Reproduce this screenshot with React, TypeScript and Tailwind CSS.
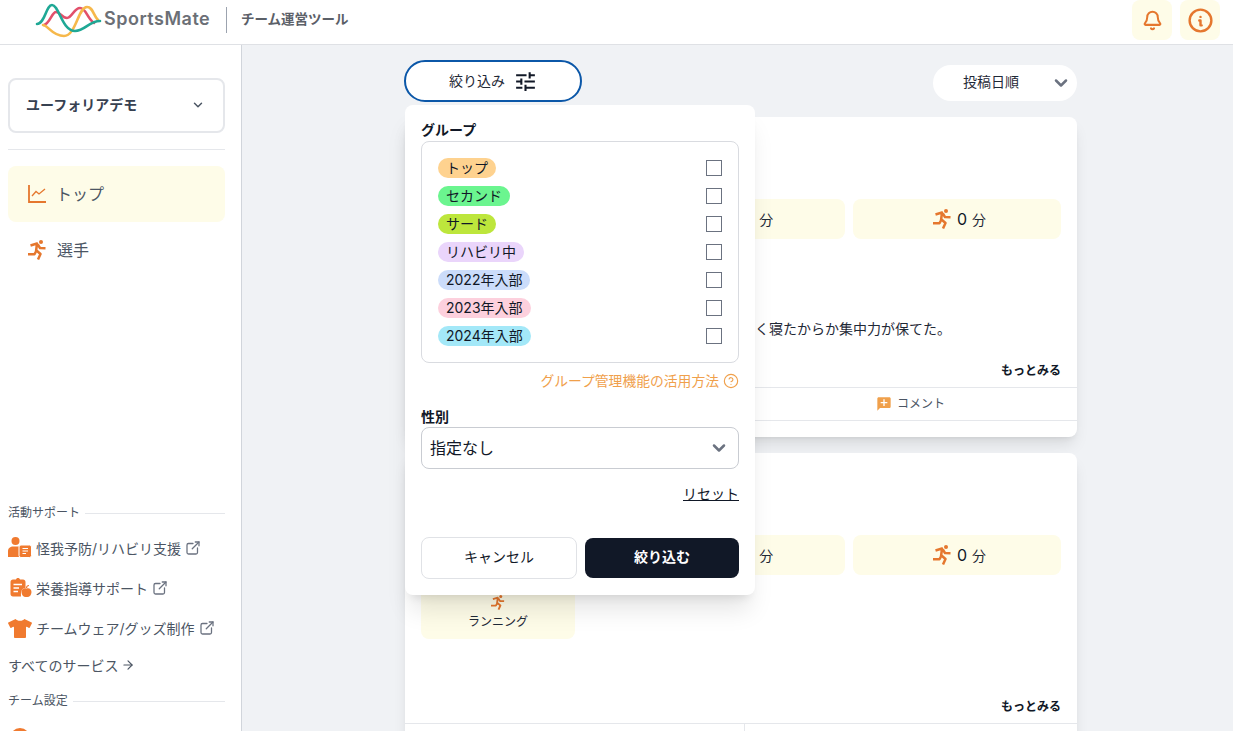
import { ArrowRight, Bell, ChevronDown, CircleHelp } from "lucide-react";
import { MdAddComment, MdTune } from "react-icons/md";
import { FaTshirt } from "react-icons/fa";
import { TbExternalLink, TbInfoCircle } from "react-icons/tb";

const font = { fontFamily: 'Inter, "Noto Sans CJK JP", sans-serif' };

function Logo() {
  return (
    <svg width="68" height="36" viewBox="0 0 68 36" fill="none" strokeWidth="2.6" strokeLinecap="round">
      <path d="M9 23C15 21 17 10 21 10C25 10 27 16 32 16C37 16 39 6 45 6C51 6 52 16 59 21" stroke="#e2506b" />
      <path d="M8 23C14 24 17 34 29 34C41 34 43 5 52 5C58 5 58 13 63 18" stroke="#f6b84b" />
      <path d="M2 22C10 22 11 3 17 3C24 3 27 29 40 29C50 29 54 19 65 19" stroke="#1fa895" />
    </svg>
  );
}

function Runner({ size = 20, className }: { size?: number; className?: string }) {
  return (
    <svg width={size * 0.9} height={size} viewBox="0 0 18 20" fill="none" className={className}>
      <circle cx="13" cy="2" r="2" fill="currentColor" />
      <path
        d="M2.500 5.500L9 3.500L8 11.500L6.500 14.200H0M9.800 4.500L12 8L17.500 8.200M8.500 10.500L12.500 14L10 19.500"
        stroke="currentColor"
        strokeWidth="2.500"
        strokeLinejoin="round"
      />
    </svg>
  );
}

function ChartIcon() {
  return (
    <svg width="18" height="18" viewBox="0 0 18 18" fill="none" stroke="#e5772e">
      <path d="M1 0V17H18" strokeWidth="1.800" />
      <path d="M4 11L8 6.500L11 9L17 4" strokeWidth="1.300" />
    </svg>
  );
}

function PersonDocIcon() {
  return (
    <svg width="24" height="22" viewBox="0 0 24 22" fill="#f07a2f">
      <circle cx="7.500" cy="4" r="4" />
      <path d="M0 20V14C0 11 2.500 9.500 5 9.500H11C12 9.500 12.500 10 12.500 11V20Z" />
      <rect x="11" y="8" width="12.500" height="12.500" rx="2" stroke="#fff" strokeWidth="1" />
      <path d="M14.500 11.500H20M14.500 14H20M14.500 16.500H18" stroke="#fff" strokeWidth="1.200" />
    </svg>
  );
}

function ClipboardAppleIcon() {
  return (
    <svg width="24" height="22" viewBox="0 0 24 22" fill="#f07a2f">
      <path d="M5 2.500H8C8.300 0.500 11.700 0.500 12 2.500H15C16.500 2.500 17.500 3.500 17.500 5V11C14 11 12.500 14 13 19.500H5C3.500 19.500 2.500 18.500 2.500 17V5C2.500 3.500 3.500 2.500 5 2.500Z" />
      <path d="M5.500 7.500H14M5.500 11H11M5.500 14.500H10" stroke="#fff" strokeWidth="1.400" />
      <path d="M18.500 11.500C21 10.500 23.500 12 23.500 15C23.500 18.500 21 20.500 18.500 20C16 20.500 13.500 18.500 13.500 15C13.500 12 16 10.500 18.500 11.500Z" />
      <path d="M18.500 11C18.500 9.500 19.500 8.500 21 8.500" stroke="#f07a2f" strokeWidth="1.200" fill="none" />
    </svg>
  );
}

function SectionLabel({ children, className }: { children: string; className?: string }) {
  return (
    <div className={`flex shrink-0 items-center gap-[5px] text-[12px] leading-[16px] text-[#4b5563] ${className ?? ""}`}>
      <span>{children}</span>
      <span className="h-px flex-1 bg-[#e5e7eb]" />
    </div>
  );
}

function SideLink({ icon, label }: { icon: React.ReactNode; label: string }) {
  return (
    <div className="flex h-[40px] items-center text-[14px] text-[#4b5563]">
      <span className="mr-[4px] flex w-[24px] justify-center">{icon}</span>
      <span>{label}</span>
      <TbExternalLink className="ml-[3px] text-[#6b7280]" size={18} strokeWidth={1.700} />
    </div>
  );
}

function Sidebar() {
  return (
    <aside className="flex h-full w-[242px] shrink-0 flex-col border-r border-[#d1d5db] bg-white pl-2 pr-4 pt-[33px]">
      <div className="flex h-[55px] shrink-0 items-center justify-between rounded-lg border-2 border-[#e5e7eb] pb-[2px] pl-[16px] pr-[18px]">
        <span className="text-[14px] font-bold text-[#374151]">ユーフォリアデモ</span>
        <ChevronDown size={14} strokeWidth={2.500} className="text-[#4b5563]" />
      </div>
      <div className="mt-[16px] h-px shrink-0 bg-[#e5e7eb]" />
      <div className="mt-[16px] flex h-[56px] shrink-0 items-center rounded-lg bg-[#fefce8] pl-[20px] text-[16px] text-[#4b5563]">
        <span className="mr-[10px]">
          <ChartIcon />
        </span>
        トップ
      </div>
      <div className="flex h-[56px] shrink-0 items-center pl-[20px] text-[16px] text-[#4b5563]">
        <Runner size={20} className="mr-[11px] text-[#e5772e]" />
        選手
      </div>
      <SectionLabel className="mt-[227px]">活動サポート</SectionLabel>
      <div className="mt-[7px] shrink-0">
        <SideLink icon={<PersonDocIcon />} label="怪我予防/リハビリ支援" />
        <SideLink icon={<ClipboardAppleIcon />} label="栄養指導サポート" />
        <SideLink icon={<FaTshirt size={25} className="text-[#f07a2f]" />} label="チームウェア/グッズ制作" />
      </div>
      <div className="mt-[7px] flex h-[20px] shrink-0 items-center text-[14px] text-[#4b5563]">
        すべてのサービス
        <ArrowRight size={14} className="ml-[3px]" />
      </div>
      <SectionLabel className="mt-[18px]">チーム設定</SectionLabel>
      <div className="mt-[9px] shrink-0">
        <SideLink
          icon={<span className="block h-[20px] w-[20px] rounded-full bg-[#f07a2f]" />}
          label="グループ管理"
        />
      </div>
    </aside>
  );
}

function Stat({ value = "0" }: { value?: string }) {
  return (
    <div className="flex h-[40px] items-center justify-center gap-[6px] rounded-lg bg-[#fefce8] pl-[5px]">
      <Runner size={20} className="text-[#e5772e]" />
      <span className="flex items-center gap-[5px]">
        <span className="text-[16px] text-[#111827]">{value}</span>
        <span className="text-[14px] text-[#1f2937]">分</span>
      </span>
    </div>
  );
}

function MoreLink() {
  return <div className="text-right text-[12px] font-bold leading-[16px] text-[#111827]">もっとみる</div>;
}

function Card({ children, className }: { children: React.ReactNode; className?: string }) {
  return <article className={`w-[672px] rounded-lg bg-white shadow-lg ${className ?? ""}`}>{children}</article>;
}

const groups = [
  { label: "トップ", bg: "bg-[#fed28f]" },
  { label: "セカンド", bg: "bg-[#6bf58f]" },
  { label: "サード", bg: "bg-[#bde63c]" },
  { label: "リハビリ中", bg: "bg-[#ead5fb]" },
  { label: "2022年入部", bg: "bg-[#cbdcfa]" },
  { label: "2023年入部", bg: "bg-[#fdd0dd]" },
  { label: "2024年入部", bg: "bg-[#a3e8f8]" },
];

function FilterPanel() {
  return (
    <div className="absolute left-0 top-[45px] z-10 h-[490px] w-[350px] rounded-lg bg-white px-4 pt-[16px] shadow-xl">
      <div className="text-[14px] font-bold leading-[18px] text-[#111827]">グループ</div>
      <div className="mt-[2px] rounded-lg border border-[#d9dbe0] px-4 py-3">
        {groups.map((g) => (
          <div key={g.label} className="flex h-[28px] items-center justify-between">
            <span className={`rounded-full px-[8px] text-[14px] leading-[20px] text-[#111827] ${g.bg}`}>{g.label}</span>
            <span className="h-[16px] w-[16px] border border-[#6b7280] bg-white" />
          </div>
        ))}
      </div>
      <div className="mt-[8px] flex items-center justify-end gap-[4px] text-[13.800px] leading-[20px] text-[#f0a04b]">
        グループ管理機能の活用方法
        <CircleHelp size={16} strokeWidth={1.700} />
      </div>
      <div className="mt-[17px] text-[14px] font-bold leading-[18px] text-[#111827]">性別</div>
      <div className="mt-px flex h-[42px] items-center justify-between rounded-lg border border-[#c9ccd2] pl-[8px] pr-[9px] text-[16px] text-[#111827]">
        指定なし
        <ChevronDown size={20} strokeWidth={3} className="text-[#6b7280]" />
      </div>
      <div className="mt-[15px] text-right text-[14px] leading-[20px] text-[#111827] underline">リセット</div>
      <div className="mt-[33px] flex items-center gap-[8px]">
        <button className="h-[42px] w-[156px] rounded-lg border border-[#e0e2e6] bg-white pb-[3px] text-[14px] text-[#111827]">
          キャンセル
        </button>
        <button className="h-[40px] w-[154px] rounded-lg bg-[#111827] pb-[3px] text-[14px] font-bold text-white">
          絞り込む
        </button>
      </div>
    </div>
  );
}

export default function App() {
  return (
    <div className="flex h-[731px] w-[1233px] flex-col overflow-hidden bg-[#f0f2f5]" style={font}>
      <header className="flex h-[45px] shrink-0 items-start border-b border-[#dfe1e5] bg-white pl-[35px] pr-[13px]">
        <div className="mt-[2px]">
          <Logo />
        </div>
        <span className="ml-px mt-[8px] w-[107px] text-[18px] font-semibold leading-[22px] tracking-[0.5px] text-[#6b6f76]">
          SportsMate
        </span>
        <span className="ml-[15px] mt-[7px] h-[26px] w-px bg-[#9ca3af]" />
        <span className="ml-[14px] mt-[10px] text-[13.500px] font-bold leading-[18px] text-[#5b6068]">チーム運営ツール</span>
        <div className="ml-auto flex gap-[8px]">
          <span className="flex h-[40px] w-[40px] items-center justify-center rounded-lg bg-[#fefce8]">
            <Bell size={21} strokeWidth={2.300} className="text-[#e5772e]" />
          </span>
          <span className="flex h-[40px] w-[40px] items-center justify-center rounded-lg bg-[#fefce8]">
            <TbInfoCircle size={29} strokeWidth={2} className="text-[#e5772e]" />
          </span>
        </div>
      </header>
      <div className="flex min-h-0 flex-1">
        <Sidebar />
        <main className="min-w-0 flex-1 pl-[163px] pt-[15px]">
          <div className="relative w-[672px]">
            <div className="flex h-[42px] items-start justify-between">
              <button className="ml-[-1px] flex h-[42px] w-[178px] items-center justify-center gap-[8px] rounded-full border-2 border-[#0b57a8] bg-white text-[14px] text-[#1f2937]">
                <span className="pb-[2px] pl-px">絞り込み</span>
                <MdTune size={25} className="text-[#111827]" />
              </button>
              <div className="relative mt-[5px] flex h-[36px] w-[144px] items-center rounded-full bg-white pb-[3px] pl-[30px] text-[14px] text-[#1f2937]">
                投稿日順
                <ChevronDown size={20} strokeWidth={3} className="absolute right-[6px] top-[8px] text-[#6b7280]" />
              </div>
            </div>
            <FilterPanel />
            <Card className="mt-[15px] h-[320px]">
              <div className="px-4 pt-[82px]">
                <div className="grid grid-cols-3 gap-2">
                  <Stat />
                  <Stat value="10" />
                  <Stat />
                </div>
                <p className="mt-[80px] pl-[334px] text-[14px] leading-[20px] text-[#1f2937]">く寝たからか集中力が保てた。</p>
                <div className="mt-[24px]">
                  <MoreLink />
                </div>
              </div>
              <div className="mt-[8px] grid h-[34px] grid-cols-[339px_1fr] border-y border-[#e5e7eb]">
                <div />
                <div className="flex items-center justify-center gap-[5px] text-[12px] text-[#4b5563]">
                  <MdAddComment size={16} className="scale-x-[-1] text-[#f0a04b]" />
                  コメント
                </div>
              </div>
            </Card>
            <Card className="mt-[16px] h-[320px]">
              <div className="px-4 pt-[82px]">
                <div className="grid grid-cols-3 gap-2">
                  <Stat />
                  <Stat value="10" />
                  <Stat />
                </div>
                <div className="mt-[10px] flex h-[54px] w-[154px] flex-col items-center justify-center rounded-lg bg-[#fefce8]">
                  <Runner size={15} className="text-[#e5772e]" />
                  <span className="mt-[4px] text-[12px] leading-[16px] text-[#1f2937]">ランニング</span>
                </div>
                <div className="mt-[60px]">
                  <MoreLink />
                </div>
              </div>
              <div className="mt-[8px] grid h-[34px] grid-cols-[340px_1fr] border-t border-[#e5e7eb]">
                <div className="border-r border-[#e5e7eb]" />
                <div />
              </div>
            </Card>
          </div>
        </main>
      </div>
    </div>
  );
}
